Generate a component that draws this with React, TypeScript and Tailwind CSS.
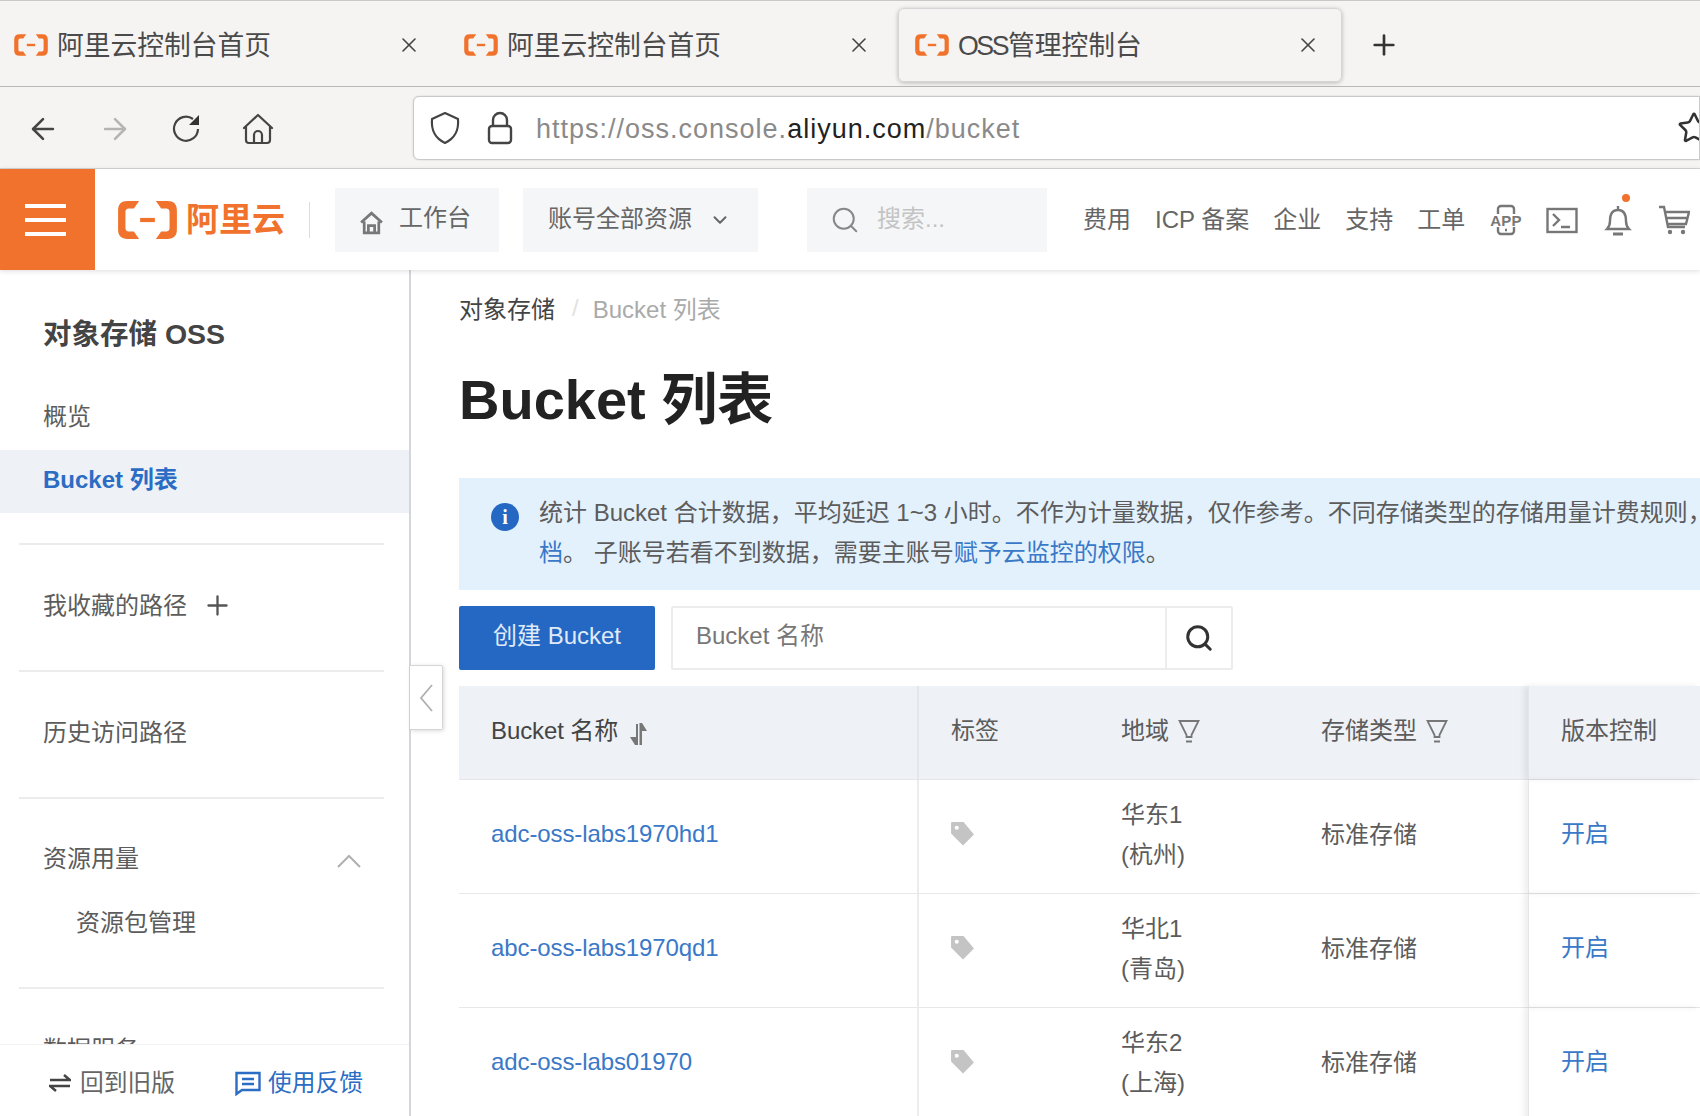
import { ArrowLeft, ArrowRight, ChevronDown, Plus, Search, Star, X } from "lucide-react";

function AliLogo({ className }: { className: string }) {
  return (
    <svg viewBox="0 0 60 40" className={className} fill="#f0722c">
      <path d="M22 2 H11 C5 2 2 5 2 11 V29 C2 35 5 38 11 38 H22 L17 31 H13 C10 31 9 30 9 27 V13 C9 10 10 9 13 9 H17 Z" />
      <path d="M38 2 H49 C55 2 58 5 58 11 V29 C58 35 55 38 49 38 H38 L43 31 H47 C50 31 51 30 51 27 V13 C51 10 50 9 47 9 H43 Z" />
      <rect x="23" y="18" width="14" height="4" />
    </svg>
  );
}

function Tab({ title, active }: { title: React.ReactNode; active?: boolean }) {
  return (
    <div className={`w-[444px] h-[74px] shrink-0 flex items-center pl-[15px] pr-[21px] rounded-[6px] ${active ? "border border-[#d5d5d8] shadow-[0_1px_4px_rgba(0,0,0,0.25)]" : ""}`}>
      <AliLogo className="w-[36px] h-[24px] shrink-0" />
      <span className="ml-[8px] mt-[3px] text-[26.75px] leading-none text-[#4a4a4a] whitespace-nowrap">{title}</span>
      <X className="ml-auto mt-[1px] w-[24px] h-[24px] text-[#444]" strokeWidth={1.6} />
    </div>
  );
}

function BrowserChrome() {
  return (
    <>
      <div className="h-[87px] bg-[#f5f4f2] border-t border-t-[#c8c8c8] border-b border-b-[#b8b8b8] flex items-center">
        <div className="flex items-center gap-[6px] ml-[-2px] mt-[2px]">
          <Tab title="阿里云控制台首页" />
          <Tab title="阿里云控制台首页" />
          <Tab active title={<><span className="tracking-[-2.500px] mr-[1px]">OSS</span>管理控制台</>} />
        </div>
        <Plus className="ml-[26px] mt-[2px] w-[32px] h-[32px] text-[#333]" strokeWidth={2} />
      </div>
      <div className="h-[82px] bg-[#f5f4f2] border-b border-b-[#d4d4d4] flex items-center pl-[26px]">
        <ArrowLeft className="w-[34px] h-[34px] text-[#444] mt-[2px]" strokeWidth={1.8} />
        <ArrowRight className="ml-[38px] w-[34px] h-[34px] text-[#b4b4b4] mt-[2px]" strokeWidth={1.8} />
        <svg viewBox="0 0 32 32" className="ml-[38px] w-[32px] h-[32px] mt-[2px]" fill="none" stroke="#444" strokeWidth="2.200">
          <path d="M28 16 A12 12 0 1 1 23 6" />
          <path d="M29 2 V12 H19 Z" fill="#333" stroke="none" />
        </svg>
        <svg viewBox="0 0 32 32" className="ml-[40px] w-[32px] h-[32px] mt-[2px]" fill="none" stroke="#444" strokeWidth="2.200" strokeLinejoin="round" strokeLinecap="round">
          <path d="M2 15 L16 2 L30 15 M4 14 V27 a3 3 0 0 0 3 3 H25 a3 3 0 0 0 3 -3 V14" />
          <path d="M12 30 V22 a4 4 0 0 1 8 0 V30" />
        </svg>
        <div className="ml-[139px] flex-1 h-[64px] bg-white border border-[#c9c9c9] rounded-l-[6px] flex items-center pl-[15px] overflow-hidden relative shadow-[0_0_2px_rgba(0,0,0,0.15)]">
          <svg viewBox="0 0 32 34" className="w-[32px] h-[34px]" fill="none" stroke="#444" strokeWidth="2.200" strokeLinejoin="round">
            <path d="M16 2 L29 8 C30 20 26 27 16 32 C6 27 2 20 3 8 Z" />
          </svg>
          <svg viewBox="0 0 26 34" className="ml-[26px] w-[26px] h-[34px]" fill="none" stroke="#444" strokeWidth="2.400">
            <rect x="2" y="15" width="22" height="17" rx="3" />
            <path d="M6 15 V9 a7 7 0 0 1 14 0 V15" />
          </svg>
          <span className="ml-[23px] mt-[3px] text-[27px] leading-none text-[#8a8a8a] whitespace-nowrap tracking-[1px]">
            https://oss.console.<span className="text-[#222]">aliyun.com</span>/bucket
          </span>
          <Star className="absolute right-[-12px] top-[14px] w-[34px] h-[34px] text-[#333]" strokeWidth={1.8} />
        </div>
      </div>
    </>
  );
}

function NavIcon({ children }: { children: React.ReactNode }) {
  return (
    <svg viewBox="0 0 32 32" className="w-[32px] h-[32px] shrink-0" fill="none" stroke="#777" strokeWidth="2.400">
      {children}
    </svg>
  );
}

function ConsoleHeader() {
  return (
    <div className="h-[101px] bg-white flex items-center relative z-10 shadow-[0_1px_5px_rgba(0,0,0,0.14)] text-[24px] text-[#666]">
      <div className="w-[95px] h-full bg-[#f0722c] flex flex-col items-center justify-center gap-[10px] pr-[4px]">
        <div className="w-[41px] h-[4px] bg-white" />
        <div className="w-[41px] h-[4px] bg-white" />
        <div className="w-[41px] h-[4px] bg-white" />
      </div>
      <AliLogo className="ml-[21px] w-[63px] h-[42px]" />
      <span className="ml-[7px] text-[33px] leading-none font-bold text-[#f0722c] whitespace-nowrap">阿里云</span>
      <div className="ml-[24px] w-px h-[36px] bg-[#ddd]" />
      <div className="ml-[25px] w-[164px] h-[64px] bg-[#f5f6f8] flex items-center pl-[24px] gap-[15px]">
        <svg viewBox="0 0 24 24" className="w-[25px] h-[25px] mt-[5px]" fill="none" stroke="#777" strokeWidth="2.600">
          <path d="M2 12 L12 3 L22 12 M5 11 V22 H19 V11 M9 22 V15 H15 V22" />
        </svg>
        <span className="mb-[3px]">工作台</span>
      </div>
      <div className="ml-[24px] w-[235px] h-[64px] bg-[#f5f6f8] flex items-center pl-[25px]">
        <span className="mb-[1px]">账号全部资源</span>
        <ChevronDown className="ml-[17px] w-[22px] h-[22px]" strokeWidth={2.2} />
      </div>
      <div className="ml-[49px] w-[240px] h-[64px] bg-[#f5f6f8] flex items-center pl-[23px] text-[#c4c4c4]">
        <Search className="w-[30px] h-[30px] text-[#888]" strokeWidth={1.6} />
        <span className="ml-[17px] mb-[1px]">搜索...</span>
      </div>
      <div className="ml-[36px] flex items-center gap-[24px] whitespace-nowrap">
        <span>费用</span>
        <span>ICP 备案</span>
        <span>企业</span>
        <span>支持</span>
        <span>工单</span>
      </div>
      <div className="ml-[25px] flex items-center gap-[24px]">
        <NavIcon>
          <path d="M8 10 V5 a3 3 0 0 1 3 -3 H21 a3 3 0 0 1 3 3 V10 M8 23 V27 a3 3 0 0 0 3 3 H21 a3 3 0 0 0 3 -3 V23 M15 26 H17" />
          <text x="16" y="21.500" textAnchor="middle" fontSize="15" fontWeight="700" letterSpacing="0.2" fill="#777" stroke="none" fontFamily="Liberation Sans, sans-serif">APP</text>
        </NavIcon>
        <NavIcon>
          <rect x="1.500" y="5" width="29" height="23" />
          <path d="M7 10 L13 16 L7 22 M15 23 H24" />
        </NavIcon>
        <div className="relative">
          <NavIcon>
            <path d="M16 2 V6 M16 6 C9 6 8 12 8 17 C8 21 7 23 5 25 H27 C25 23 24 21 24 17 C24 12 23 6 16 6 Z" />
            <path d="M11 30 H21" strokeWidth="3" />
          </NavIcon>
          <div className="absolute top-[-10px] left-[20px] w-[8px] h-[8px] rounded-full bg-[#f0722c]" />
        </div>
        <NavIcon>
          <path d="M1 3 H6 L10 23 H27 M7 8 H31 L28 20 H9 M8 14 H29" />
          <circle cx="12" cy="28" r="2.200" fill="#777" stroke="none" />
          <circle cx="25" cy="28" r="2.200" fill="#777" stroke="none" />
        </NavIcon>
      </div>
    </div>
  );
}

function Divider() {
  return <div className="ml-[19px] mr-[25px] h-[2px] bg-[#ececec]" />;
}

function SideRow({ children, className = "" }: { children: React.ReactNode; className?: string }) {
  return <div className={`h-[63px] flex items-center pl-[43px] whitespace-nowrap ${className}`}>{children}</div>;
}

function SideChevron({ up }: { up?: boolean }) {
  return (
    <svg viewBox="0 0 24 14" className="w-[24px] h-[14px] mt-[4px]" fill="none" stroke="#b0b0b0" strokeWidth="2">
      <path d={up ? "M1 13 L12 2 L23 13" : "M1 1 L12 12 L23 1"} />
    </svg>
  );
}

function Sidebar() {
  return (
    <aside className="w-[411px] shrink-0 border-r-2 border-r-[#d3d6da] flex flex-col text-[24px] text-[#5c5c5c] bg-white">
      <div className="flex-1 overflow-hidden">
        <div className="pt-[46px] pb-[35px] pl-[43px] text-[28.5px] leading-[36px] font-semibold text-[#444]">对象存储 OSS</div>
        <SideRow className="pb-[4px]">概览</SideRow>
        <SideRow className="bg-[#eef1f6] font-bold text-[#2b6cc4] pb-[4px]">Bucket 列表</SideRow>
        <div className="h-[30px]" />
        <Divider />
        <SideRow className="mt-[29px]">
          我收藏的路径
          <Plus className="ml-[15px] w-[31px] h-[31px] text-[#555]" strokeWidth={1.8} />
        </SideRow>
        <div className="h-[33px]" />
        <Divider />
        <SideRow className="mt-[29px]">历史访问路径</SideRow>
        <div className="h-[33px]" />
        <Divider />
        <SideRow className="mt-[29px] pr-[48px] justify-between pb-[2px]">
          资源用量
          <SideChevron up />
        </SideRow>
        <SideRow className="pl-[76px]">资源包管理</SideRow>
        <div className="h-[33px]" />
        <Divider />
        <SideRow className="mt-[29px] pr-[48px] justify-between">
          数据服务
          <SideChevron />
        </SideRow>
      </div>
      <div className="h-[72px] shrink-0 bg-white border-t border-t-[#f2f2f2] flex items-center pl-[49px] pt-[4px] whitespace-nowrap">
        <svg viewBox="0 0 22 20" className="w-[22px] h-[20px]" fill="none" stroke="#444" strokeWidth="2.500">
          <path d="M1 7 H21 L15 2 M21 13 H1 L7 18" />
        </svg>
        <span className="ml-[9px] text-[#666] text-[23.75px]">回到旧版</span>
        <svg viewBox="0 0 26 26" className="ml-[60px] w-[26px] h-[26px]" fill="none" stroke="#2b6cc4" strokeWidth="2.400">
          <path d="M1.500 3 H24.500 V20 H7 L1.500 24 Z M7 9 H19 M7 14 H19" />
        </svg>
        <span className="ml-[7px] text-[#2b6cc4] text-[23.75px]">使用反馈</span>
      </div>
    </aside>
  );
}

function TagIcon() {
  return (
    <svg viewBox="0 0 24 24" className="w-[25px] h-[25px]" fill="#c4c4c4">
      <path d="M1 2 a1 1 0 0 1 1 -1 H13 L23 13 L12.500 23.500 L1 12 Z" />
      <circle cx="6.500" cy="6.500" r="2" fill="#fff" />
    </svg>
  );
}

function FilterIcon() {
  return (
    <svg viewBox="0 0 22 24" className="w-[22px] h-[24px] ml-[9px] shrink-0" fill="none" stroke="#777" strokeWidth="1.800">
      <path d="M1.500 2 H20.500 L13.500 16 V18 H8.500 V16 Z M8 22.500 H14" />
    </svg>
  );
}

const grid = "grid grid-cols-[460px_172px_200px_237px_1fr]";

const rows = [
  { name: "adc-oss-labs1970hd1", region: "华东1", city: "(杭州)" },
  { name: "abc-oss-labs1970qd1", region: "华北1", city: "(青岛)" },
  { name: "adc-oss-labs01970", region: "华东2", city: "(上海)" },
];

const stickyCol = "border-l border-l-[#e4e6ea] shadow-[-4px_0_6px_rgba(0,0,0,0.07)]";

function BucketTable() {
  return (
    <div className="mt-[16px] text-[24px] text-[#5c5c5c]">
      <div className={`${grid} h-[94px] bg-[#eef1f6] border-b border-b-[#e4e6ea] whitespace-nowrap`}>
        <div className="flex items-center pl-[32px] pb-[4px] border-r-2 border-r-[#e4e6ea] text-[#444] tracking-[-0.1px]">
          Bucket 名称
          <svg viewBox="0 0 20 24" className="ml-[9px] mt-[6px] w-[22px] h-[24px]" fill="#777">
            <path d="M8 2 V15 H2 L7 23 H10 V2 Z M11.500 23 V1 H14 L19 9 H14 V23 Z" />
          </svg>
        </div>
        <div className="flex items-center pl-[32px] pb-[4px]">标签</div>
        <div className="flex items-center pl-[30px] pb-[4px]">
          地域
          <FilterIcon />
        </div>
        <div className="flex items-center pl-[30px] pb-[4px]">
          存储类型
          <FilterIcon />
        </div>
        <div className={`flex items-center pl-[32px] pb-[4px] ${stickyCol}`}>版本控制</div>
      </div>
      {rows.map((row) => (
        <div key={row.name} className={`${grid} h-[114px] border-b border-b-[#e8e8e8]`}>
          <div className="flex items-center pl-[32px] pb-[6px] border-r-2 border-r-[#ececec] text-[#3a78c8] tracking-[-0.1px]">{row.name}</div>
          <div className="flex items-center pl-[31px] pb-[6px]">
            <TagIcon />
          </div>
          <div className="flex flex-col justify-center pl-[30px] pb-[4px] leading-[40px]">
            <span>{row.region}</span>
            <span>{row.city}</span>
          </div>
          <div className="flex items-center pl-[30px] pb-[4px]">标准存储</div>
          <div className={`flex items-center pl-[32px] pb-[6px] text-[#3a78c8] ${stickyCol}`}>开启</div>
        </div>
      ))}
    </div>
  );
}

function MainPanel() {
  return (
    <main className="flex-1 min-w-0 pl-[48px] overflow-hidden bg-white text-[24px] text-[#5c5c5c]">
      <div className="mt-[23px] h-[34px] flex items-center whitespace-nowrap">
        <span className="text-[#444]">对象存储</span>
        <span className="ml-[17px] mb-[4px] text-[#e2e2e2]">/</span>
        <span className="ml-[14px] text-[#aaa]">Bucket 列表</span>
      </div>
      <h1 className="mt-[39px] text-[56px] leading-[68px] font-bold text-[#222] whitespace-nowrap">Bucket 列表</h1>
      <div className="mt-[44px] h-[112px] bg-[#e3f1fd] flex pl-[32px] overflow-hidden">
        <div className="mt-[25px] w-[28px] h-[28px] rounded-full bg-[#2468c4] shrink-0 flex items-center justify-center text-white text-[20px] font-bold leading-none font-['Liberation_Serif',serif]">i</div>
        <div className="ml-[20px] mt-[15px] leading-[40px] whitespace-nowrap">
          <div>统计 Bucket 合计数据，平均延迟 1~3 小时。不作为计量数据，仅作参考。不同存储类型的存储用量计费规则，</div>
          <div>
            <span className="text-[#3a78c8]">档</span>。 子账号若看不到数据，需要主账号<span className="text-[#3a78c8]">赋予云监控的权限</span>。
          </div>
        </div>
      </div>
      <div className="mt-[16px] h-[64px] flex">
        <button className="w-[196px] pb-[4px] bg-[#2468c4] text-[#e0eaf8] rounded-[2px]">创建 Bucket</button>
        <div className="ml-[16px] w-[562px] border-2 border-[#ececec] rounded-[2px] flex items-center">
          <span className="flex-1 pl-[23px] pb-[4px] text-[#777] whitespace-nowrap">Bucket 名称</span>
          <div className="w-[66px] h-full border-l-2 border-l-[#ececec] flex items-center justify-center">
            <Search className="w-[30px] h-[30px] text-[#333]" strokeWidth={2.4} />
          </div>
        </div>
      </div>
      <BucketTable />
    </main>
  );
}

export default function App() {
  return (
    <div className="w-[1700px] h-[1116px] overflow-hidden flex flex-col bg-white font-['Liberation_Sans','Noto_Sans_CJK_SC',sans-serif]">
      <BrowserChrome />
      <ConsoleHeader />
      <div className="flex-1 min-h-0 flex relative">
        <Sidebar />
        <MainPanel />
        <div className="absolute left-[410px] top-[395px] w-[33px] h-[65px] bg-white border border-[#d5d5d5] border-l-0 rounded-r-[2px] shadow-[1px_1px_4px_rgba(0,0,0,0.15)] flex items-center justify-center">
          <svg viewBox="0 0 14 28" className="w-[14px] h-[28px]" fill="none" stroke="#b0b0b0" strokeWidth="1.800">
            <path d="M13 1 L2 14 L13 27" />
          </svg>
        </div>
      </div>
    </div>
  );
}
